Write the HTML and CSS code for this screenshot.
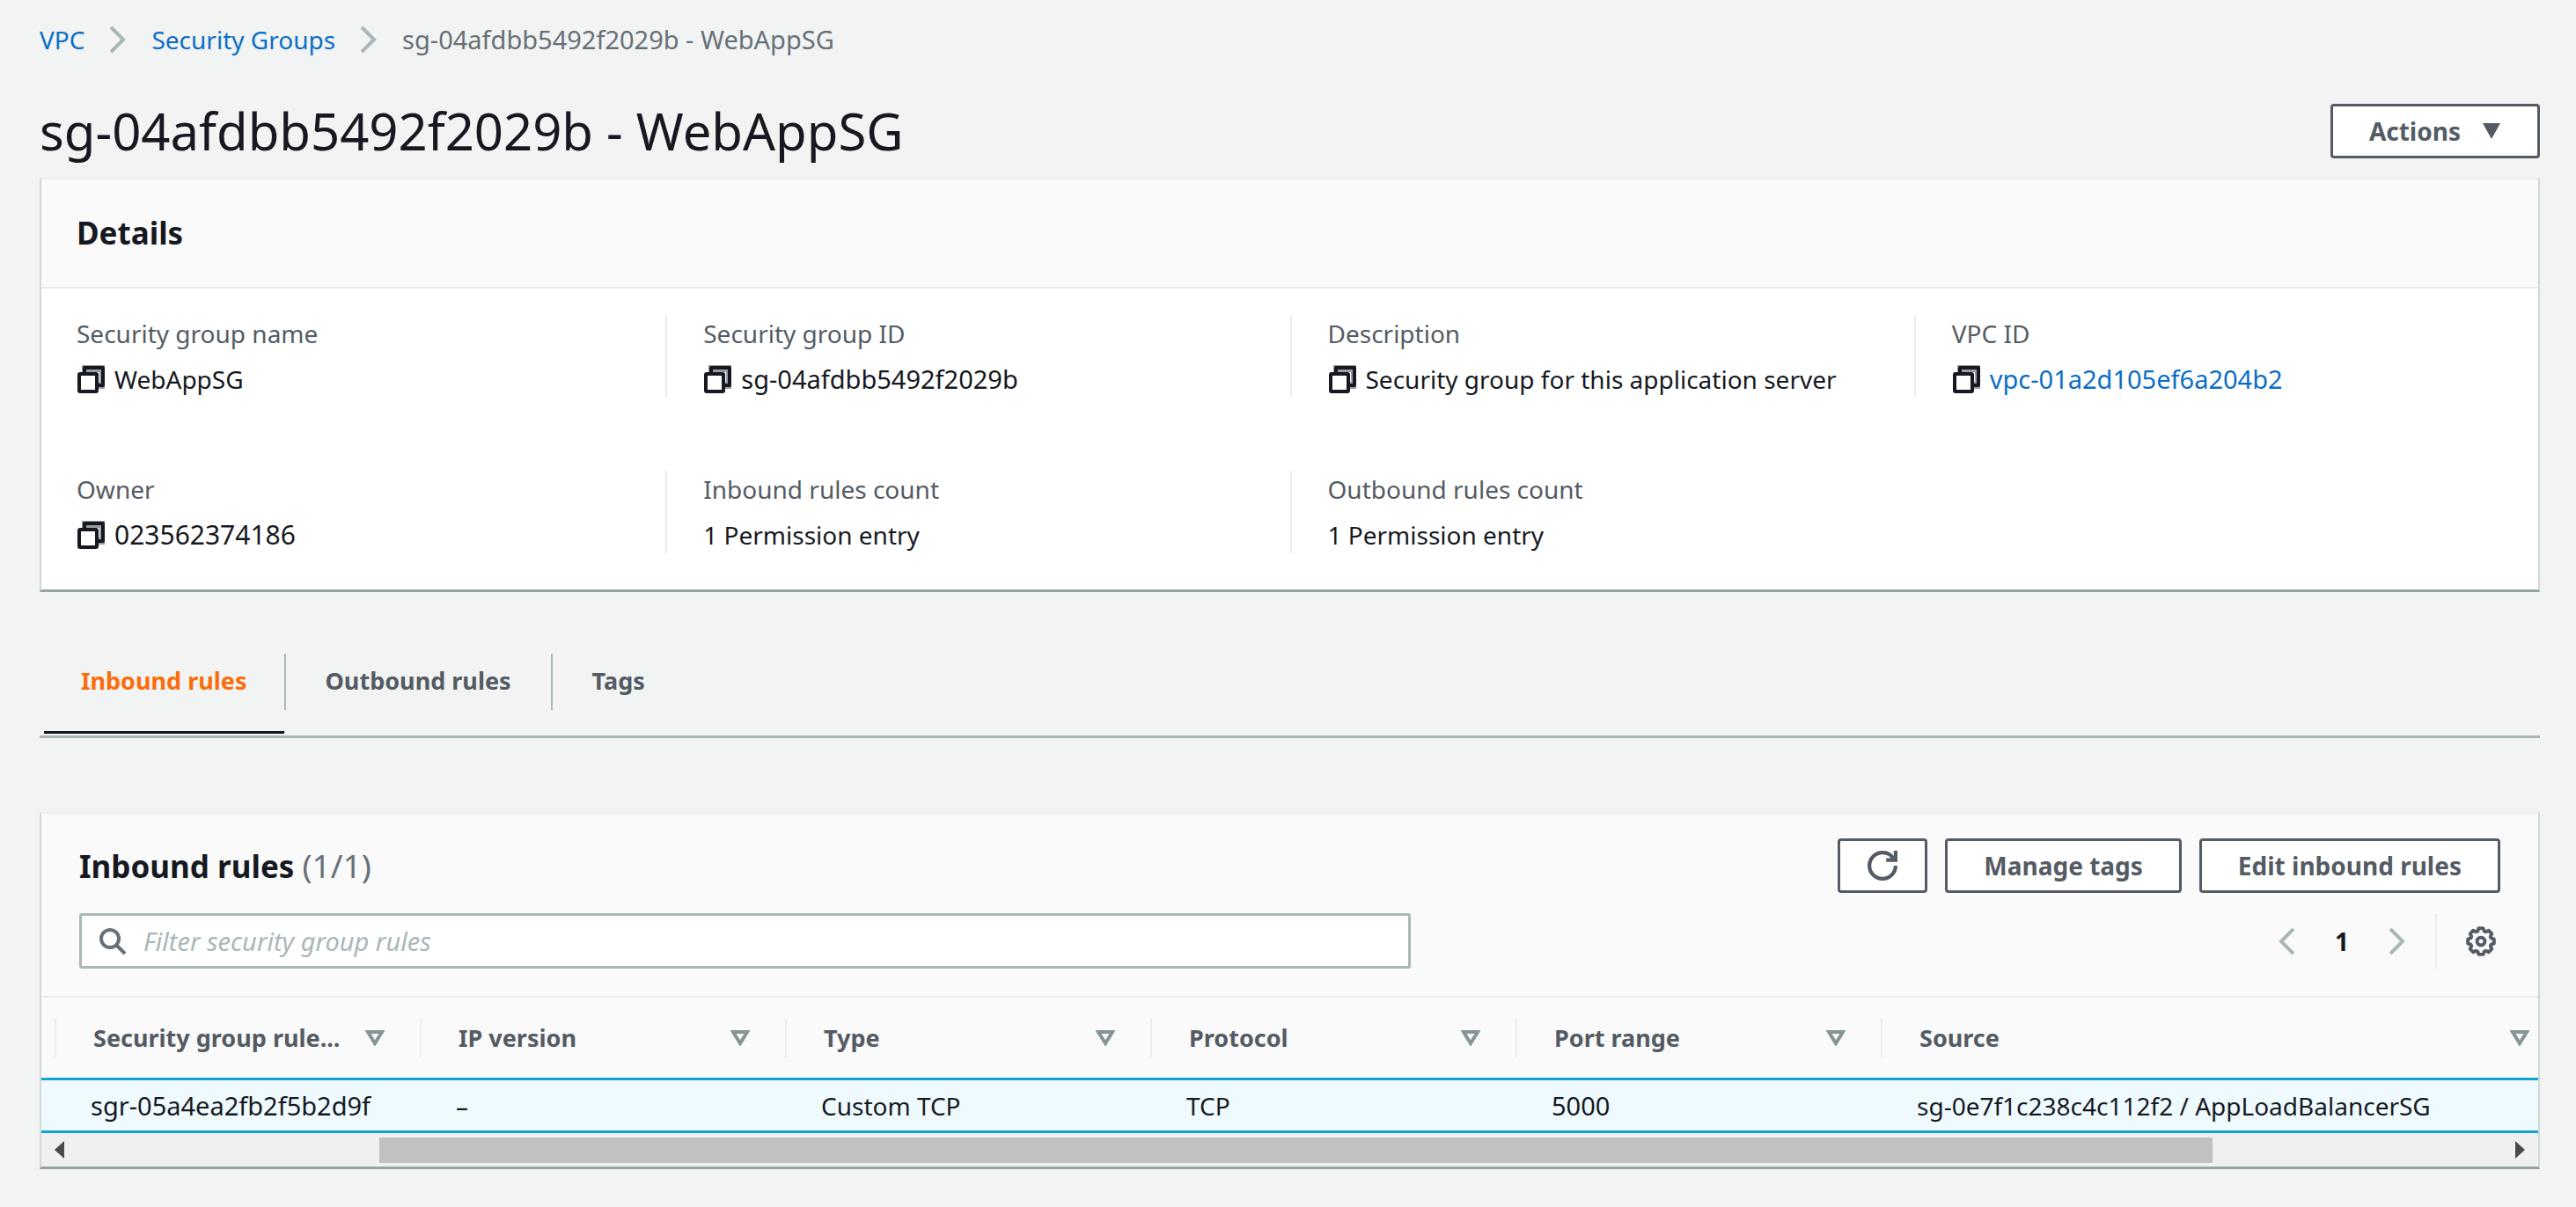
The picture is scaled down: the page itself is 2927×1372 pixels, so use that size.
FILE: index.html
```
<!DOCTYPE html>
<html lang="en">
<head>
<meta charset="utf-8">
<title>sg-04afdbb5492f2029b - WebAppSG</title>
<meta name="viewport" content="width=device-width, initial-scale=1">
<link rel="stylesheet" href="styles.css">
</head>
<body>
<svg class="sprite" aria-hidden="true">
  <symbol id="copy" viewBox="0 0 32 32"><path d="M10 10V4h20v19h-5" fill="none" stroke="#9a9da1" stroke-width="8"/><path d="M9 8V3h21v20h-6" fill="none" stroke="#16191f" stroke-width="4" stroke-linejoin="round"/><rect x="3" y="10" width="20" height="20" rx="1" fill="#fff" stroke="#16191f" stroke-width="4"/></symbol>
  <symbol id="chevron" viewBox="0 0 18 32"><path d="M1 2l14 14L1 30" fill="none" stroke="currentColor" stroke-width="4"/></symbol>
  <symbol id="sort" viewBox="0 0 22 18"><path d="M3 2h16l-8 13z" fill="none" stroke="currentColor" stroke-width="4"/></symbol>
  <symbol id="gear" viewBox="-8 -8 16 16"><g fill="none" stroke="currentColor" stroke-width="1.8" stroke-linejoin="round" stroke-linecap="round">
    <circle r="2.1"/>
    <path id="tooth" d="M5.27-2.18L5.5-1.7 7-1.2V1.2L5.5 1.7 5.27 2.18"/>
    <use href="#tooth" transform="rotate(45)"/><use href="#tooth" transform="rotate(90)"/><use href="#tooth" transform="rotate(135)"/><use href="#tooth" transform="rotate(180)"/><use href="#tooth" transform="rotate(225)"/><use href="#tooth" transform="rotate(270)"/><use href="#tooth" transform="rotate(315)"/></g></symbol>
</svg>

<nav class="breadcrumbs" aria-label="Breadcrumbs">
  <a href="#">VPC</a>
  <svg class="chevron"><use href="#chevron"/></svg>
  <a href="#">Security Groups</a>
  <svg class="chevron"><use href="#chevron"/></svg>
  <span class="id">sg-04afdbb5492f2029b - WebAppSG</span>
</nav>

<main>
  <header class="page-header">
    <h1>sg-04afdbb5492f2029b - WebAppSG</h1>
    <button class="btn" type="button">Actions
      <svg class="caret" viewBox="0 0 22 18"><path d="M1 0h20L11 18z" fill="currentColor"/></svg>
    </button>
  </header>

  <section class="card">
    <div class="card-title"><h2>Details</h2></div>
    <dl class="details">
      <div class="field"><dt>Security group name</dt><dd><svg class="icon"><use href="#copy"/></svg>WebAppSG</dd></div>
      <div class="field"><dt>Security group ID</dt><dd class="id"><svg class="icon"><use href="#copy"/></svg>sg-04afdbb5492f2029b</dd></div>
      <div class="field"><dt>Description</dt><dd><svg class="icon"><use href="#copy"/></svg>Security group for this application server</dd></div>
      <div class="field"><dt>VPC ID</dt><dd class="id"><svg class="icon"><use href="#copy"/></svg><a href="#">vpc-01a2d105ef6a204b2</a></dd></div>
      <div class="field"><dt>Owner</dt><dd class="number"><svg class="icon"><use href="#copy"/></svg>023562374186</dd></div>
      <div class="field"><dt>Inbound rules count</dt><dd>1 Permission entry</dd></div>
      <div class="field"><dt>Outbound rules count</dt><dd>1 Permission entry</dd></div>
    </dl>
  </section>

  <div class="tabs" role="tablist">
    <button class="tab active" role="tab" aria-selected="true" type="button">Inbound rules</button>
    <span class="tab-divider"></span>
    <button class="tab" role="tab" aria-selected="false" type="button">Outbound rules</button>
    <span class="tab-divider"></span>
    <button class="tab" role="tab" aria-selected="false" type="button">Tags</button>
  </div>

  <section class="card">
    <div class="toolbar">
      <div class="toolbar-row">
        <h2>Inbound rules <span class="count">(1/1)</span></h2>
        <div class="actions">
          <button class="btn btn-icon" type="button" aria-label="Refresh">
            <svg class="icon-lg" viewBox="0 0 16 16" fill="none" stroke="currentColor" stroke-width="2"><path d="M15 8c0 3.87-3.13 7-7 7s-7-3.13-7-7 3.13-7 7-7c2.79 0 5.2 1.63 6.33 4"/><path d="M10 5h5V0"/></svg>
          </button>
          <button class="btn" type="button">Manage tags</button>
          <button class="btn" type="button">Edit inbound rules</button>
        </div>
      </div>
      <div class="toolbar-row">
        <label class="search">
          <svg class="icon" viewBox="0 0 32 32" fill="none" stroke="#687078" stroke-width="4"><circle cx="13" cy="13" r="10"/><path d="M20 20l10 10"/></svg>
          <input type="text" placeholder="Filter security group rules" aria-label="Filter security group rules">
        </label>
        <div class="pager">
          <button class="plain" type="button" aria-label="Previous page"><svg class="chevron flip"><use href="#chevron"/></svg></button>
          <b>1</b>
          <button class="plain" type="button" aria-label="Next page"><svg class="chevron"><use href="#chevron"/></svg></button>
          <button class="plain settings" type="button" aria-label="Preferences"><svg class="icon-lg"><use href="#gear"/></svg></button>
        </div>
      </div>
    </div>
    <table class="rules">
      <colgroup><col class="col-edge"><col class="col"><col class="col"><col class="col"><col class="col"><col class="col"><col></colgroup>
      <thead><tr>
        <td></td>
        <th><div class="head">Security group rule...<svg class="caret"><use href="#sort"/></svg></div></th>
        <th><div class="head">IP version<svg class="caret"><use href="#sort"/></svg></div></th>
        <th><div class="head">Type<svg class="caret"><use href="#sort"/></svg></div></th>
        <th><div class="head">Protocol<svg class="caret"><use href="#sort"/></svg></div></th>
        <th><div class="head">Port range<svg class="caret"><use href="#sort"/></svg></div></th>
        <th><div class="head last">Source<svg class="caret"><use href="#sort"/></svg></div></th>
      </tr></thead>
      <tbody><tr>
        <td></td>
        <td class="id">sgr-05a4ea2fb2f5b2d9f</td>
        <td>–</td>
        <td>Custom TCP</td>
        <td>TCP</td>
        <td class="id">5000</td>
        <td>sg-0e7f1c238c4c112f2 / AppLoadBalancerSG</td>
      </tr></tbody>
    </table>
    <div class="scrollbar" aria-hidden="true">
      <svg class="arrow" viewBox="0 0 12 20"><path d="M12 0v20L1 10z" fill="#4a4a4a"/></svg>
      <div class="track"><div class="thumb"></div></div>
      <svg class="arrow flip" viewBox="0 0 12 20"><path d="M12 0v20L1 10z" fill="#4a4a4a"/></svg>
    </div>
  </section>
</main>
</body>
</html>
```
FILE: styles.css
```
* { box-sizing: border-box; }

body {
  margin: 0;
  padding: 24px 41px 40px 45px;
  background: #f2f3f3;
  color: #16191f;
  font: 28px/42px "Noto Sans", "Open Sans", sans-serif;
}

h1, h2, dl, dd { margin: 0; }
a { color: #0a6ec6; text-decoration: none; }
button, input { font: inherit; color: inherit; }
svg { flex: none; display: block; }

.sprite { position: absolute; width: 0; height: 0; }
.icon { width: 32px; height: 32px; }
.icon-lg { width: 34px; height: 34px; }
.caret { width: 22px; height: 18px; }
.chevron { width: 18px; height: 32px; color: #aab7b8; }
.flip { transform: scaleX(-1); }
.id { font-size: 29px; }
.number { font-size: 30px; }

.breadcrumbs { display: flex; align-items: center; gap: 29px; color: #687078; }

.page-header {
  display: flex;
  align-items: center;
  justify-content: space-between;
  margin: 44px 0 14px;
}
h1 { font-size: 58px; line-height: 78px; font-weight: 400; }
h2 { font-size: 35px; line-height: 46px; font-weight: 700; }
.count { color: #687078; font-size: 37px; font-weight: 400; }

.btn {
  display: flex;
  align-items: center;
  gap: 24px;
  height: 62px;
  padding: 0 41px;
  border: 3px solid #545b64;
  border-radius: 4px;
  background: #fff;
  color: #545b64;
  font-weight: 700;
}
.btn-icon { padding: 0 31px; }

.card {
  border: 2px solid #d0d7d7;
  border-top-color: #eaeded;
  border-bottom: 3px solid #95a3a4;
  background: #fff;
}
.card-title {
  padding: 38px 40px;
  border-bottom: 2px solid #eaeded;
  background: #fafafa;
}

.details {
  display: grid;
  grid-template-columns: repeat(4, 1fr);
  row-gap: 83px;
  padding: 30px 0 41px;
}
.field { padding-left: 41px; border-left: 2px solid #eaeded; }
.field:nth-child(4n + 1) { padding-left: 40px; border-left: 0; }
dt { margin-bottom: 10px; color: #545b64; }
dd { display: flex; align-items: center; gap: 11px; }

.tabs {
  display: flex;
  align-items: flex-start;
  gap: 0 3px;
  margin: 43px 0 84px;
  padding: 0 5px 2px;
  border-bottom: 3px solid #aab7b8;
}
.tab {
  padding: 37px 42px 36px;
  border: 0;
  border-bottom: 3px solid transparent;
  background: none;
  color: #545b64;
  font-size: 27px;
  font-weight: 700;
}
.tab.active { margin-right: -3px; border-bottom-color: #16191f; color: #fb6d0a; }
.tab-divider { width: 2px; height: 64px; margin-top: 27px; background: #aab7b8; }

.toolbar {
  display: grid;
  gap: 23px;
  padding: 28px 43px 31px;
  border-bottom: 2px solid #eaeded;
  background: #fafafa;
}
.toolbar-row { display: flex; align-items: center; justify-content: space-between; }
.actions { display: flex; gap: 20px; }

.search {
  display: flex;
  align-items: center;
  gap: 19px;
  width: 55%;
  height: 63px;
  padding: 0 19px;
  border: 3px solid #aab7b8;
  border-radius: 3px;
  background: #fff;
  font-size: 29px;
}
.search input { flex: 1; min-width: 0; padding: 0; border: 0; outline: 0; background: none; }
.search input::placeholder { color: #aab7b8; font-style: italic; opacity: 1; }

.pager { display: flex; align-items: center; gap: 46px; }
.plain { padding: 0; border: 0; background: none; color: #545b64; }
.settings {
  display: flex;
  align-items: center;
  height: 63px;
  margin-left: -12px;
  padding: 0 5px 0 33px;
  border-left: 2px solid #eaeded;
}

.rules { width: 100%; table-layout: fixed; border-spacing: 0; }
.col-edge { width: 15px; }
.col { width: 415px; }
.rules th, .rules td { padding: 0; text-align: left; white-space: nowrap; }
.rules thead { background: #fafafa; color: #545b64; font-size: 27px; }
.rules thead th { height: 91px; }
.head {
  display: flex;
  align-items: center;
  justify-content: space-between;
  height: 44px;
  padding: 0 40px 0 42px;
  border-left: 2px solid #eaeded;
}
.head .caret { color: #879596; }
.head.last { padding-right: 10px; }
.rules tbody td {
  height: 63px;
  padding-left: 41px;
  border: solid #12a2cf;
  border-width: 3px 0;
  background: #effaff;
}
.rules tbody td:first-child { padding: 0; }

.scrollbar {
  display: flex;
  align-items: center;
  gap: 13px;
  height: 38px;
  padding: 0 14px;
  background: #f0f0f0;
}
.arrow { width: 12px; height: 20px; }
.track { flex: 1; }
.thumb { width: 75.5%; height: 29px; margin-left: 12.5%; background: #c1c1c1; }
```
